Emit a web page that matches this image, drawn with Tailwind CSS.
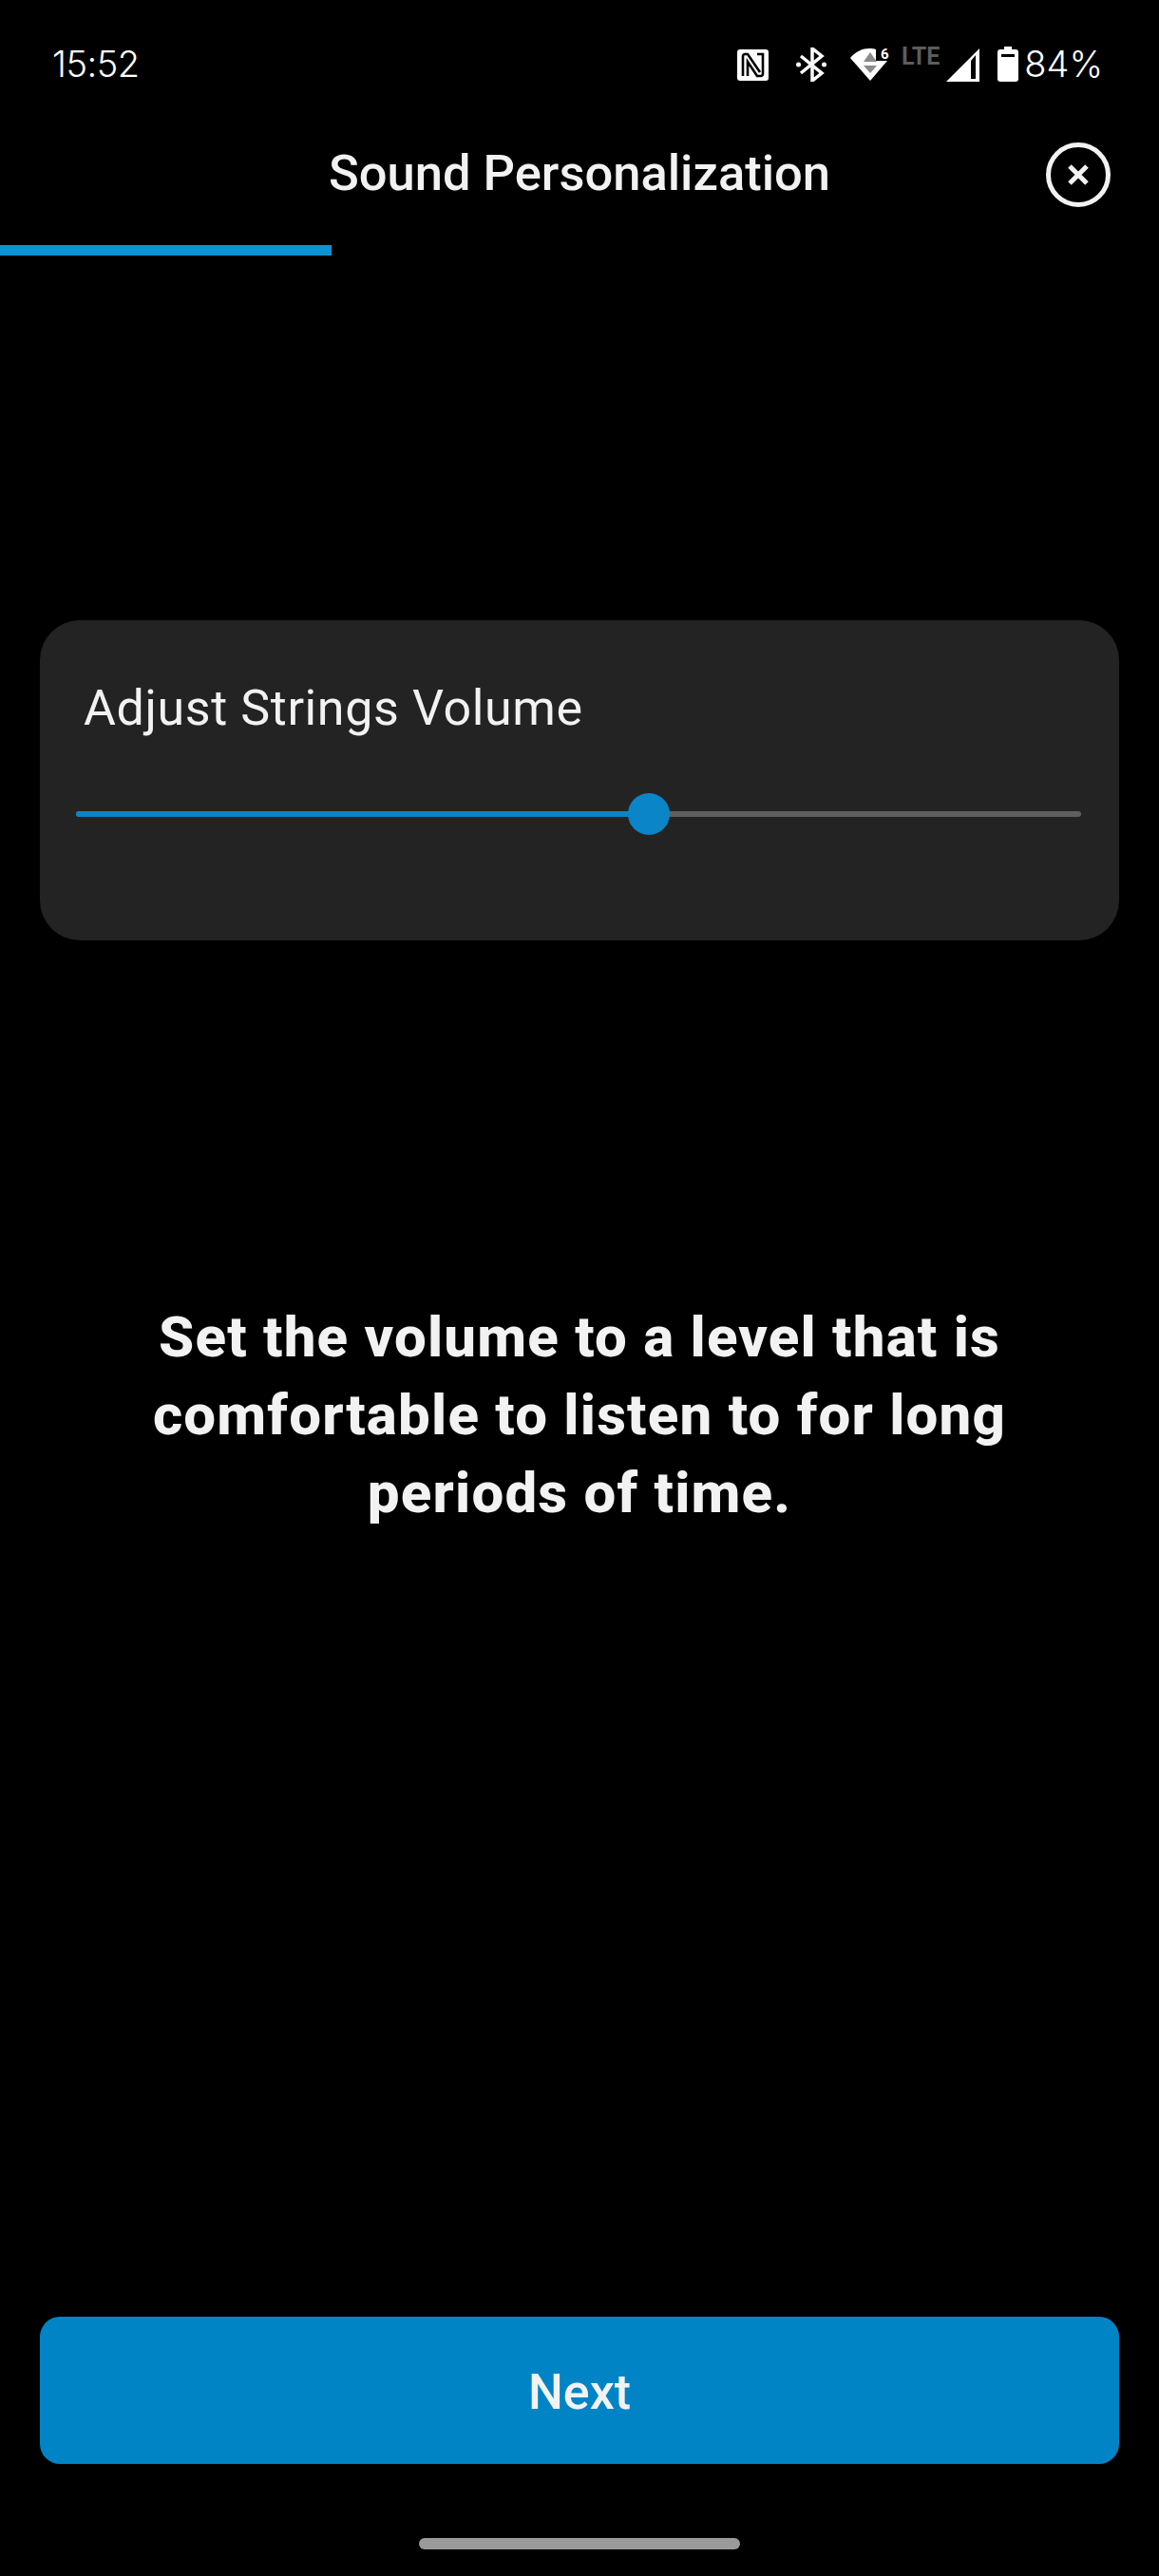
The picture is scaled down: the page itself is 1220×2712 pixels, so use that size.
<!DOCTYPE html>
<html lang="en">

<head>
    <meta charset="UTF-8">
    <meta name="viewport" content="width=device-width, initial-scale=1.0">
    <title>Sound Personalization</title>
    <script src="https://cdn.jsdelivr.net/npm/@tailwindcss/browser@4"></script>
</head>

<body class="bg-black">
    <main class="w-[1220px] h-[2712px] bg-black text-[#f2f2f2] flex flex-col font-['Roboto',sans-serif]">
        <div class="h-[68px] pt-[44px] pl-[55px] pr-[59px] flex items-start justify-between text-white">
            <span class="text-[38px] leading-[46px] tracking-[-0.5px] font-light font-['Inter',sans-serif]">15:52</span>
            <div class="flex items-start">
                <svg class="w-[33px] h-[33px] mt-[8px]" viewBox="0 0 33 33">
                    <rect width="33" height="33" rx="3" fill="#fff" />
                    <path fill="none" stroke="#000" stroke-width="2.6" d="M6 28V7c0-1 1-2 2-2h3l13 19M11 28V13l10 15h4c1 0 2-1 2-2V5h-6" />
                </svg>
                <svg class="w-[32px] h-[36px] mt-[6px] ml-[29px]" viewBox="0 0 32 36" fill="none" stroke="#fff" stroke-width="3.5">
                    <path d="M5 9l22 18-10 8V1l10 8L5 27" />
                    <circle cx="2.5" cy="18" r="2.5" fill="#fff" stroke="none" />
                    <circle cx="29.5" cy="18" r="2.5" fill="#fff" stroke="none" />
                </svg>
                <div class="relative w-[42px] h-[34px] mt-[7px] ml-[25px]">
                    <svg class="w-[42px] h-[34px]" viewBox="0 0 42 34">
                        <path fill="#fff" d="M0 10C6 3 13 0 20 0c3 0 5 0 7 1v12h12L21 34z" />
                        <path fill="#8a8a8a" d="M21 4l7 10H14zM14 18h14l-7 8z" />
                    </svg>
                    <span class="absolute left-[32px] -top-[3px] text-[15px] leading-[18px] font-bold text-white">6</span>
                </div>
                <span class="mt-[3px] ml-[12px] text-[25px] leading-[26px] font-bold text-[#5c5c5c]">LTE</span>
                <svg class="w-[35px] h-[35px] mt-[7px] ml-[7px]" viewBox="0 0 35 35">
                    <path fill="#fff" fill-rule="evenodd" d="M35 0v35H0zM31 7L26 13v19h5z" />
                </svg>
                <svg class="w-[22px] h-[37px] mt-[5px] ml-[19px]" viewBox="0 0 22 37">
                    <path fill="#fff" fill-rule="evenodd" d="M7 0h8v3h4a3 3 0 0 1 3 3v28a3 3 0 0 1-3 3H3a3 3 0 0 1-3-3V6a3 3 0 0 1 3-3h4zM4 8v3h14V8z" />
                </svg>
                <span class="ml-[6px] text-[38px] leading-[46px] font-light font-['Inter',sans-serif]">84%</span>
            </div>
        </div>

        <div class="relative h-[190px] pt-[83px] text-center">
            <h1 class="text-[52.5px] leading-[62px] font-medium">Sound Personalization</h1>
            <button class="absolute left-[1101px] top-[82px] w-[68px] h-[68px] rounded-full border-[5px] border-[#f2f2f2] flex items-center justify-center">
                <svg class="w-[22px] h-[22px]" viewBox="0 0 22 22" stroke="#f2f2f2" stroke-width="5">
                    <path d="M2 2l18 18M20 2L2 20" />
                </svg>
            </button>
        </div>

        <div class="w-[349px] h-[11px] bg-[#0a94d6]"></div>

        <section class="mx-[42px] mt-[384px] h-[337px] rounded-[42px] bg-[#232323] pt-[61px]">
            <h2 class="ml-[46px] text-[52px] leading-[64px] tracking-[0.6px]">Adjust Strings Volume</h2>
            <div class="relative ml-[38px] w-[1058px] h-[6px] mt-[76px] bg-[#5f5f5f] rounded-full">
                <div class="h-full w-[603px] bg-[#0a85c7] rounded-l-full"></div>
                <div class="absolute left-[581px] -top-[19px] w-[44px] h-[44px] rounded-full bg-[#0a85c7]"></div>
            </div>
        </section>

        <p class="mt-[377px] text-center text-[60px] leading-[82px] tracking-[1.2px] font-extrabold">
            Set the volume to a level that is<br>comfortable to listen to for long<br>periods of time.
        </p>

        <button class="mx-[42px] mt-[826px] h-[155px] pt-[5px] shrink-0 rounded-[21px] bg-[#0084c6] text-[52px] font-medium">Next</button>

        <div class="mx-auto mt-[78px] w-[338px] h-[12px] shrink-0 rounded-full bg-[#9a9a9a]"></div>
    </main>
</body>

</html>
